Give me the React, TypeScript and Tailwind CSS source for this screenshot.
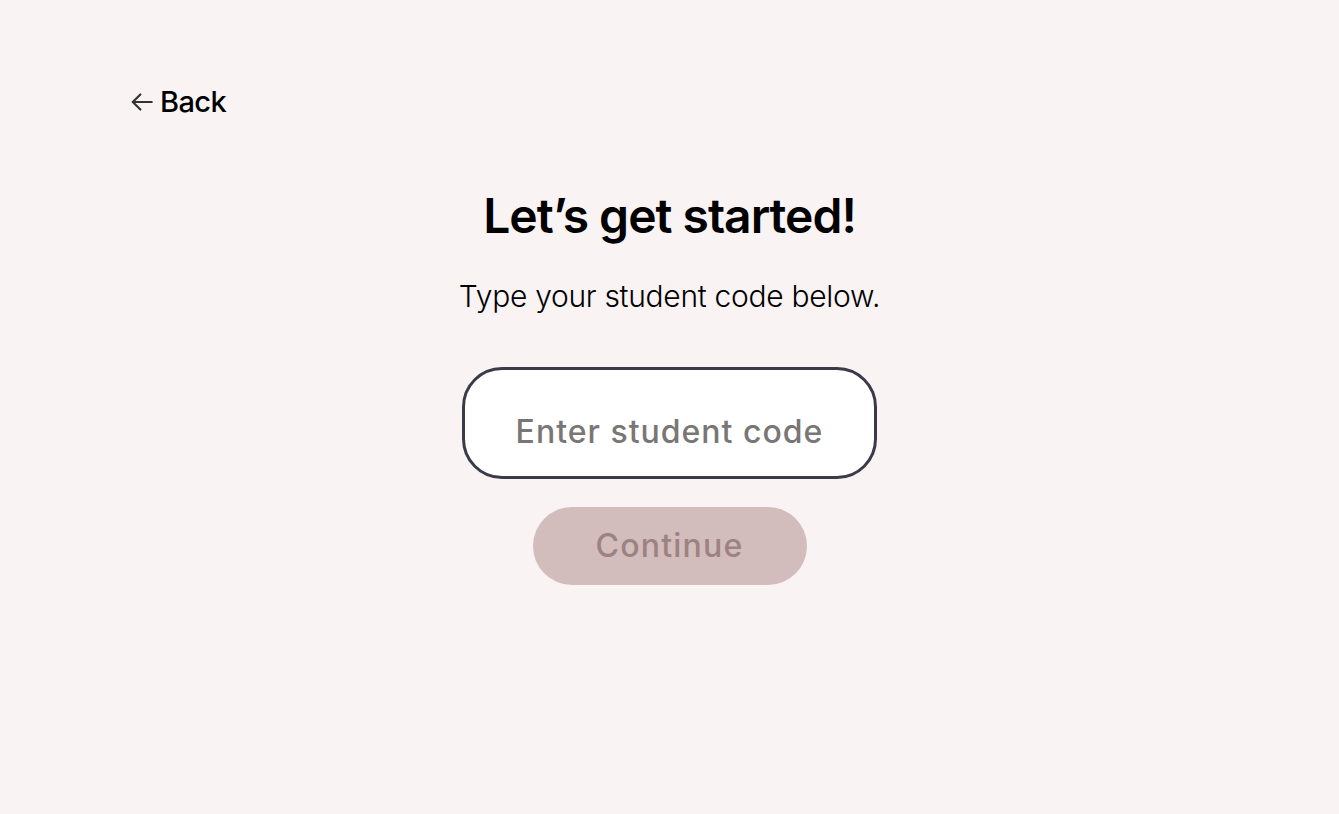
import React from "react";

export default function App() {
  return (
    <div className="min-h-screen w-full bg-[#f9f3f3] text-black" style={{ fontFamily: "Inter, 'Noto Sans', sans-serif" }}>
      <div className="pl-[129px] pt-[86px]">
        <button className="flex items-center gap-[5px] text-[29px] font-medium leading-[32px] tracking-[-0.6px] text-black">
          <svg width="26" height="26" viewBox="0 0 24 24" fill="none" stroke="#333" strokeWidth="2" strokeLinecap="round" strokeLinejoin="round">
            <path d="M21 12H3.5" />
            <path d="M10.5 5l-7 7 7 7" />
          </svg>
          Back
        </button>
      </div>
      <div className="flex flex-col items-center">
        <h1 className="mt-[70px] text-[48px] font-semibold leading-[56px] tracking-[-1px]">Let’s get started!</h1>
        <p className="mt-[34px] text-[30px] font-light leading-[36px] tracking-[-0.3px]">Type your student code below.</p>
        <div className="mt-[53px] flex h-[112px] w-[415px] items-center justify-center rounded-[40px] border-[3px] border-[#3b3a48] bg-white pt-[18px]">
          <span className="text-[32px] font-medium tracking-[1px] text-[#797676]">Enter student code</span>
        </div>
        <button className="mt-[28px] flex h-[78px] w-[274px] items-center justify-center rounded-full bg-[#d2bcbc] text-[32px] font-medium tracking-[1.2px] text-[#9c8281]">
          Continue
        </button>
      </div>
    </div>
  );
}
